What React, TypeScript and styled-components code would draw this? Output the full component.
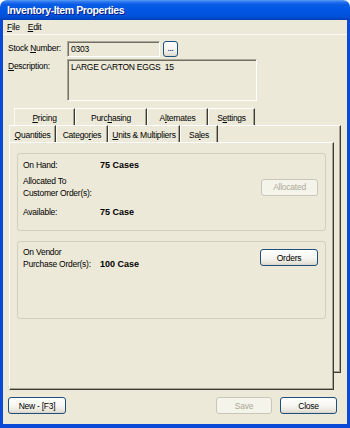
import React from 'react';
import styled, { createGlobalStyle } from 'styled-components';

const FONT = `"Liberation Sans", Arial, sans-serif`;

const Global = createGlobalStyle`
  html, body { margin: 0; padding: 0; background: #ffffff; }
  body { font-family: ${FONT}; }
`;

const Window = styled.div`
  width: 350px;
  height: 428px;
  display: flex;
  flex-direction: column;
  font-family: ${FONT};
  font-size: 8.5px;
  letter-spacing: -0.25px;
  color: #000;
`;

const TitleBar = styled.div`
  height: 20px;
  flex: none;
  box-sizing: border-box;
  border-radius: 7px 7px 0 0;
  background: linear-gradient(180deg, #5b9cf5 0%, #2a77ee 9%, #0a5ce6 22%, #0056e3 50%, #0052dc 80%, #0047c8 92%, #003cb2 100%);
  display: flex;
  align-items: center;
  padding-left: 7px;
  color: #fff;
  font-weight: bold;
  font-size: 10.5px;
  letter-spacing: -0.4px;
  text-shadow: 1px 1px #0a1883;
`;

const Body = styled.div`
  flex: 1;
  min-height: 0;
  display: flex;
  flex-direction: column;
  background: #ece9d8;
  border-style: solid;
  border-color: #0a4ad6;
  border-width: 0 3px 4px 3px;
`;

const MenuBar = styled.div`
  height: 14px;
  display: flex;
  align-items: center;
  border-bottom: 1px solid #fbfaf5;
`;

const MenuItem = styled.span`
  padding: 0 4px;
`;

const U = styled.span`
  text-decoration: underline;
  text-underline-offset: 1px;
`;

const Form = styled.div`
  display: flex;
  flex-direction: column;
  gap: 2px;
  padding: 6px 0 0 5px;
`;

const FieldRow = styled.div`
  display: flex;
  align-items: flex-start;
`;

const FieldLabel = styled.div`
  width: 59px;
  line-height: 15px;
`;

const Sunken = styled.div<{ $w: number; $h: number }>`
  width: ${(p) => p.$w}px;
  height: ${(p) => p.$h}px;
  box-sizing: border-box;
  border: 1px solid;
  border-color: #aca899 #ffffff #ffffff #aca899;
  box-shadow: inset 1px 1px #716f64;
  padding: 2px 3px;
  line-height: 10px;
  background: #ece9d8;
  white-space: pre;
`;

const BrowseBtn = styled.div`
  width: 15px;
  height: 16px;
  box-sizing: border-box;
  margin-left: 3px;
  border: 1px solid #1c5180;
  border-radius: 3px;
  background: linear-gradient(180deg, #ffffff 0%, #f4f3ee 60%, #dcd8cc 100%);
  display: flex;
  align-items: flex-end;
  justify-content: center;
  padding-bottom: 3px;
  font-weight: bold;
  font-size: 8px;
  line-height: 8px;
  color: #1c3f7a;
`;

const TabArea = styled.div`
  margin: 7px 0 0 6px;
  width: 332px;
  display: flex;
  flex-direction: column;
`;

const TabRow = styled.div<{ $indent: number }>`
  display: flex;
  height: 17px;
  margin-left: ${(p) => p.$indent}px;
`;

const Tab = styled.div<{ $w: number }>`
  width: ${(p) => p.$w}px;
  height: 17px;
  box-sizing: border-box;
  background: #ece9d8;
  border-top: 1px solid #ffffff;
  border-left: 1px solid #fbfaf4;
  border-right: 1px solid #3c3b36;
  box-shadow: inset -1px 0 #a6a391;
  display: flex;
  align-items: center;
  justify-content: center;
  padding-top: 1px;
`;

const Stack = styled.div`
  display: grid;
`;

const BackPage = styled.div`
  grid-area: 1 / 1;
  margin-left: 5px;
  height: 248px;
  box-sizing: border-box;
  border-top: 1px solid #ffffff;
  border-right: 1px solid #3c3b36;
  border-bottom: 1px solid #3c3b36;
  box-shadow: inset -1px -1px #a6a391;
  background: #ece9d8;
`;

const Front = styled.div`
  grid-area: 1 / 1;
  margin-right: 7px;
  display: flex;
  flex-direction: column;
`;

const FrontPage = styled.div`
  height: 248px;
  box-sizing: border-box;
  background: #ece9d8;
  border: 1px solid;
  border-color: #ffffff #3c3b36 #3c3b36 #ffffff;
  box-shadow: inset -1px -1px #a6a391;
  padding: 10px 7px 0 7px;
  display: flex;
  flex-direction: column;
  gap: 10px;
`;

const Group = styled.div<{ $pt: number }>`
  height: 78px;
  box-sizing: border-box;
  border: 1px solid #d0d0bf;
  border-radius: 3px;
  padding: ${(p) => p.$pt}px 7px 0 5px;
  display: flex;
  flex-direction: column;
`;

const InfoRow = styled.div<{ $gap: number }>`
  display: flex;
  align-items: center;
  margin-top: ${(p) => p.$gap}px;
`;

const InfoLabel = styled.div`
  width: 77px;
  line-height: 12px;
`;

const InfoValue = styled.div<{ $end?: boolean }>`
  font-weight: bold;
  font-size: 9px;
  letter-spacing: 0;
  line-height: 12px;
  align-self: ${(p) => (p.$end ? 'flex-end' : 'center')};
`;

const Spacer = styled.div`
  flex: 1;
`;

const Button = styled.div<{ $w: number; $disabled?: boolean; $top?: number }>`
  width: ${(p) => p.$w}px;
  height: 17px;
  box-sizing: border-box;
  border: 1px solid ${(p) => (p.$disabled ? '#c9c7ba' : '#1f4f7c')};
  border-radius: 3px;
  background: ${(p) =>
    p.$disabled
      ? '#f5f4ea'
      : 'linear-gradient(180deg, #ffffff 0%, #f6f5f0 55%, #e6e3d8 88%, #d6d0c5 100%)'};
  color: ${(p) => (p.$disabled ? '#aca899' : '#000')};
  display: flex;
  align-items: center;
  justify-content: center;
  align-self: ${(p) => (p.$top !== undefined ? 'flex-start' : 'center')};
  margin-top: ${(p) => p.$top ?? 0}px;
`;

const ButtonBar = styled.div`
  display: flex;
  align-items: center;
  margin-top: 7px;
  padding: 0 10px 0 5px;
  gap: 8px;
`;

export default function App() {
  return (
    <>
      <Global />
      <Window>
        <TitleBar>Inventory-Item Properties</TitleBar>
        <Body>
          <MenuBar>
            <MenuItem>
              <U>F</U>ile
            </MenuItem>
            <MenuItem>
              <U>E</U>dit
            </MenuItem>
          </MenuBar>
          <Form>
            <FieldRow>
              <FieldLabel>
                Stock <U>N</U>umber:
              </FieldLabel>
              <Sunken $w={93} $h={16}>0303</Sunken>
              <BrowseBtn>...</BrowseBtn>
            </FieldRow>
            <FieldRow>
              <FieldLabel>
                <U>D</U>escription:
              </FieldLabel>
              <Sunken $w={190} $h={42}>LARGE CARTON EGGS  15</Sunken>
            </FieldRow>
          </Form>
          <TabArea>
            <TabRow $indent={5}>
              <Tab $w={61}>
                <U>P</U>ricing
              </Tab>
              <Tab $w={72}>
                Purc<U>h</U>asing
              </Tab>
              <Tab $w={61}>
                A<U>l</U>ternates
              </Tab>
              <Tab $w={47}>
                S<U>e</U>ttings
              </Tab>
            </TabRow>
            <Stack>
              <BackPage />
              <Front>
                <TabRow $indent={0}>
                  <Tab $w={47}>
                    <U>Q</U>uantities
                  </Tab>
                  <Tab $w={52}>
                    Catego<U>r</U>ies
                  </Tab>
                  <Tab $w={72}>
                    <U>U</U>nits &amp; Multipliers
                  </Tab>
                  <Tab $w={38}>
                    Sa<U>l</U>es
                  </Tab>
                </TabRow>
                <FrontPage>
                  <Group $pt={5}>
                    <InfoRow $gap={0}>
                      <InfoLabel>On Hand:</InfoLabel>
                      <InfoValue>75 Cases</InfoValue>
                    </InfoRow>
                    <InfoRow $gap={4}>
                      <InfoLabel>
                        Allocated To
                        <br />
                        Customer Order(s):
                      </InfoLabel>
                      <Spacer />
                      <Button $w={57} $disabled>
                        Allocated
                      </Button>
                    </InfoRow>
                    <InfoRow $gap={7}>
                      <InfoLabel>Available:</InfoLabel>
                      <InfoValue>75 Case</InfoValue>
                    </InfoRow>
                  </Group>
                  <Group $pt={4}>
                    <InfoRow $gap={0}>
                      <InfoLabel>
                        On Vendor
                        <br />
                        Purchase Order(s):
                      </InfoLabel>
                      <InfoValue $end>100 Case</InfoValue>
                      <Spacer />
                      <Button $w={58} $top={3}>
                        Orders
                      </Button>
                    </InfoRow>
                  </Group>
                </FrontPage>
              </Front>
            </Stack>
          </TabArea>
          <ButtonBar>
            <Button $w={58}>New - [F3]</Button>
            <Spacer />
            <Button $w={56} $disabled>
              Save
            </Button>
            <Button $w={57}>Close</Button>
          </ButtonBar>
        </Body>
      </Window>
    </>
  );
}
